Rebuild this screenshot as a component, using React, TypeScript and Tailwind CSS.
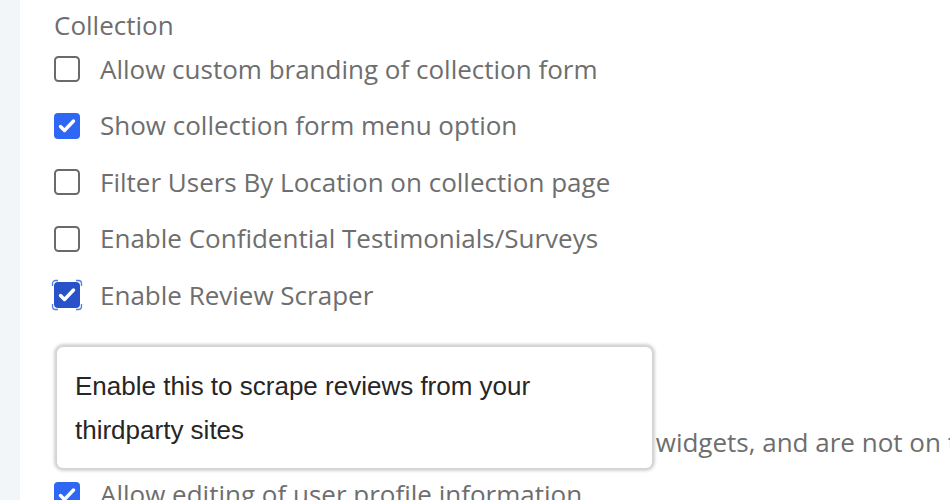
import React from 'react';

type Box = { label: string; checked?: boolean; focused?: boolean };

const ROWS: Box[] = [
  { label: 'Allow custom branding of collection form' },
  { label: 'Show collection form menu option', checked: true },
  { label: 'Filter Users By Location on collection page' },
  { label: 'Enable Confidential Testimonials/Surveys' },
  { label: 'Enable Review Scraper', checked: true, focused: true },
];

const Checkbox = ({ checked, focused }: { checked?: boolean; focused?: boolean }) => (
  <svg width="26" height="26" viewBox="0 0 26 26" className="shrink-0 overflow-visible">
    {checked ? (
      <rect x="0" y="0" width="26" height="26" rx="4" fill={focused ? '#2a52c8' : '#2f67f5'} />
    ) : (
      <rect x="1" y="1" width="24" height="24" rx="3.5" fill="white" stroke="#6a6a6a" strokeWidth="2" />
    )}
    {checked && (
      <path d="M6.5 13.5l4 4 9-9.5" fill="none" stroke="white" strokeWidth="3.4" strokeLinecap="round" strokeLinejoin="round" />
    )}
    {focused && (
      <g fill="none" stroke="#4f7fe6" strokeWidth="1.3">
        <path d="M-1.5 4v-2.5a3 3 0 0 1 3-3h2.5" />
        <path d="M22 -1.5h2.5a3 3 0 0 1 3 3v2.5" />
        <path d="M27.5 22v2.5a3 3 0 0 1-3 3h-2.5" />
        <path d="M4 27.5h-2.5a3 3 0 0 1-3-3v-2.5" />
      </g>
    )}
  </svg>
);

const Row = ({ label, checked, focused }: Box) => (
  <label className="flex h-[56.5px] items-center gap-5 whitespace-nowrap">
    <Checkbox checked={checked} focused={focused} />
    <span>{label}</span>
  </label>
);

export default function App() {
  return (
    <div className="flex h-[500px] w-[950px] overflow-hidden bg-white">
      <div className="w-5 shrink-0 bg-[#f3f6f8]" />
      <div className="relative flex-1 pl-[34px] pt-[9px] font-['Open_Sans',sans-serif] text-[26px] text-[#6e6e6e]">
        <h2 className="leading-[32px]">Collection</h2>
        {ROWS.map((r) => (
          <Row key={r.label} {...r} />
        ))}

        <p className="mt-[100px] whitespace-nowrap pl-[46px] leading-[36px]">
          Show testimonials that were kept from public widgets, and are not on the wall of love
        </p>
        <div className="mt-[7px]">
          <Row label="Allow editing of user profile information" checked />
        </div>

        {/* tooltip for the focused checkbox */}
        <div className="absolute left-[37px] top-[347px] w-[595px] rounded-md bg-white px-[18px] pt-[17px] pb-4 font-['Liberation_Sans',Arial,sans-serif] text-[26px] leading-[44px] text-[#262626] shadow-[0_0_3px_3px_rgba(0,0,0,0.18)]">
          Enable this to scrape reviews from your thirdparty sites
        </div>
      </div>
    </div>
  );
}
